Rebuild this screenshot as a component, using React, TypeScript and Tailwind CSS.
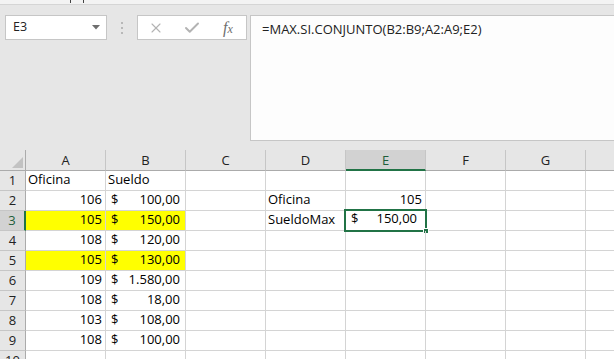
import { X, Check } from "lucide-react";

type Row = {
  a?: string;
  b?: string;
  d?: string;
  e?: string;
  text?: boolean;
  yellow?: boolean;
};

const rows: Row[] = [
  { a: "Oficina", b: "Sueldo", text: true },
  { a: "106", b: "100,00", d: "Oficina", e: "105" },
  { a: "105", b: "150,00", yellow: true, d: "SueldoMax" },
  { a: "108", b: "120,00" },
  { a: "105", b: "130,00", yellow: true },
  { a: "109", b: "1.580,00" },
  { a: "108", b: "18,00" },
  { a: "103", b: "108,00" },
  { a: "108", b: "100,00" },
  {},
];

// H is only partly visible, its letter falls outside the window
const cols = ["A", "B", "C", "D", "E", "F", "G", ""];

function Currency({ value }: { value: string }) {
  return (
    <div className="flex h-full w-full items-end justify-between pb-[1px] pl-[5px] pr-[5px]">
      <span>$</span>
      <span>{value}</span>
    </div>
  );
}

export default function App() {
  return (
    <div className="h-[359px] w-[614px] overflow-hidden bg-[#e6e6e6] font-['Open_Sans',sans-serif] text-[13px] text-black">
      {/* ribbon edge */}
      <div className="relative h-[5px] border-b border-[#d5d5d5] bg-[#f3f3f3]">
        <div className="absolute left-[70px] top-0 h-[3px] w-[1px] bg-[#444]" />
        <div className="absolute left-[83px] top-0 h-[3px] w-[1px] bg-[#444]" />
      </div>

      {/* formula bar */}
      <div className="flex h-[145px] items-start pt-[10px]">
        <div className="ml-[5px] flex h-[25px] w-[102px] items-center justify-between border border-[#c6c6c6] bg-white pl-[7px] pr-[6px] text-[12.5px] text-[#222]">
          <span>E3</span>
          <svg width="8" height="5" viewBox="0 0 8 5">
            <path d="M0 0 L8 0 L4 4.5 Z" fill="#6e6e6e" />
          </svg>
        </div>
        <div className="flex h-[25px] w-[30px] flex-col items-center justify-center gap-[3px]">
          <span className="h-[2px] w-[2px] bg-[#b8b8b8]" />
          <span className="h-[2px] w-[2px] bg-[#b8b8b8]" />
          <span className="h-[2px] w-[2px] bg-[#b8b8b8]" />
        </div>
        <div className="flex h-[25px] w-[110px] items-center border border-[#c6c6c6] bg-white">
          <span className="flex w-[36px] justify-center">
            <X size={16} strokeWidth={1.7} color="#b3b3b3" />
          </span>
          <span className="flex w-[36px] justify-center">
            <Check size={18} strokeWidth={2.6} color="#b3b3b3" />
          </span>
          <span className="flex w-[36px] items-baseline justify-center font-['Liberation_Serif',serif] text-[16px] italic text-[#6e6e6e]">
            f<span className="text-[12px]">x</span>
          </span>
        </div>
        <div className="ml-[3px] h-[126px] flex-1 border-b border-l border-t border-[#c6c6c6] bg-[#fdfdfd] pl-[11px] pt-[4px] text-[13px] text-[#222]">
          =MAX.SI.CONJUNTO(B2:B9;A2:A9;E2)
        </div>
      </div>

      {/* sheet */}
      <div className="grid grid-cols-[26px_80px_80px_80px_80px_80px_80px_80px_80px] bg-white">
        {/* column headers */}
        <div className="relative h-[21px] border-b border-r border-[#ababab] bg-[#e6e6e6]">
          <svg className="absolute bottom-[2px] right-[2px]" width="11" height="11" viewBox="0 0 11 11">
            <path d="M11 0 L11 11 L0 11 Z" fill="#c2c2c2" />
          </svg>
        </div>
        {cols.map((c, i) => (
          <div
            key={i}
            className={
              c === "E"
                ? "flex h-[21px] items-center justify-center border-b-2 border-r border-b-[#217346] border-r-[#c6c6c6] bg-[#d2d2d2] pt-[2px] text-[#1e5e3a]"
                : "flex h-[21px] items-center justify-center border-b border-r border-b-[#ababab] border-r-[#c6c6c6] bg-[#e6e6e6] pt-[1px] text-[#222]"
            }
          >
            {c}
          </div>
        ))}

        {rows.map((r, i) => {
          const n = i + 1;
          const fill = r.yellow ? "bg-[#ffff00]" : "bg-white";
          return [
            <div
              key={`h${n}`}
              className={
                n === 3
                  ? "flex h-[20px] items-center justify-center border-b border-r-2 border-b-[#c6c6c6] border-r-[#217346] bg-[#d2d2d2] text-[#1e5e3a]"
                  : "flex h-[20px] items-center justify-center border-b border-r border-b-[#c6c6c6] border-r-[#ababab] bg-[#e6e6e6] text-[#222]"
              }
            >
              {n}
            </div>,
            <div key={`a${n}`} className={`flex h-[20px] items-end border-b border-r border-[#d4d4d4] pb-[1px] ${fill} ${r.text ? "pl-[2px]" : "justify-end pr-[3px]"}`}>
              {r.a}
            </div>,
            <div key={`b${n}`} className={`flex h-[20px] border-b border-r border-[#d4d4d4] ${fill} ${r.text ? "items-end pb-[1px] pl-[2px]" : ""}`}>
              {r.b && (r.text ? r.b : <Currency value={r.b} />)}
            </div>,
            <div key={`c${n}`} className="h-[20px] border-b border-r border-[#d4d4d4]" />,
            <div key={`d${n}`} className="flex h-[20px] items-end border-b border-r border-[#d4d4d4] pb-[1px] pl-[2px]">
              {r.d}
            </div>,
            <div key={`e${n}`} className="relative flex h-[20px] items-end justify-end border-b border-r border-[#d4d4d4] pb-[1px] pr-[3px]">
              {r.e}
              {n === 3 && (
                <>
                  <Currency value="150,00" />
                  <div className="absolute -left-[2px] -top-[2px] h-[23px] w-[83px] border-2 border-[#217346]" />
                  <div className="absolute -bottom-[4px] -right-[4px] h-[6px] w-[6px] border border-white bg-[#217346]" />
                </>
              )}
            </div>,
            <div key={`f${n}`} className="h-[20px] border-b border-r border-[#d4d4d4]" />,
            <div key={`g${n}`} className="h-[20px] border-b border-r border-[#d4d4d4]" />,
            <div key={`i${n}`} className="h-[20px] border-b border-r border-[#d4d4d4]" />,
          ];
        })}
      </div>
    </div>
  );
}
